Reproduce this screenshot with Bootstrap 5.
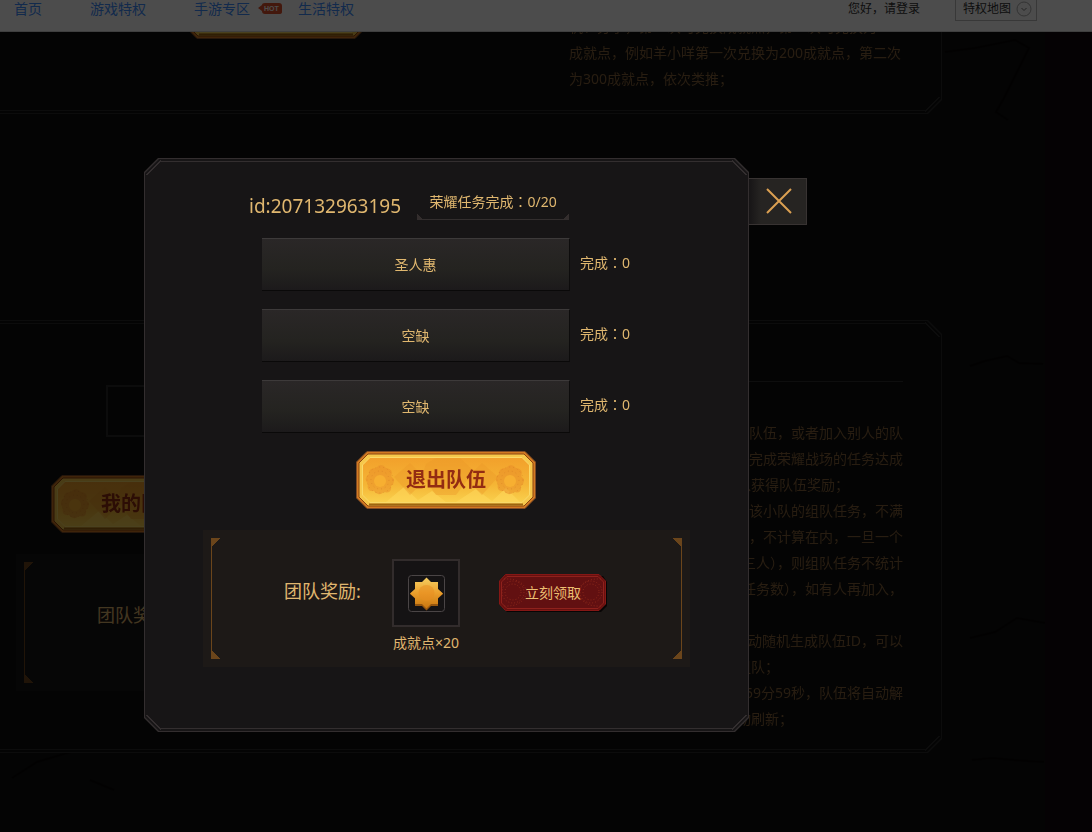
<!DOCTYPE html>
<html lang="zh-CN">
<head>
<meta charset="utf-8">
<meta name="viewport" content="width=device-width, initial-scale=1">
<title>荣耀战场</title>
<link href="https://cdn.jsdelivr.net/npm/bootstrap@5.3.0/dist/css/bootstrap.min.css" rel="stylesheet">
<style>
body{background:#0f0e0e;color:#e0b76f;font:14px/26px "Noto Sans","Noto Sans CJK SC",sans-serif;min-height:100vh;overflow:hidden}
.mid{font-family:"Noto Sans CJK TC",sans-serif;line-height:1}
.topbar{height:32px;background:#fff;border-bottom:1px solid #d2d2d2}
.topbar .bar-row{height:18px;padding-left:14px;padding-right:55px}
.topbar a{text-decoration:none;color:#3c8cff;line-height:18px}
.topbar .login{font-size:12px;color:#333;margin-right:35px}
.nav-gap{margin-right:48px}
.map-btn{font-size:12px;line-height:20px;height:24px;background:#fff;border:1px solid #bbb;color:#333;width:82px;padding:0 4px 0 7px}
/* page behind the dialog */
.stage{margin:-40px 150px 0 0}
.scene{position:absolute;inset:0;width:100%;height:100%;z-index:-1;opacity:.5}
.edge{position:fixed;top:32px;bottom:0;right:0;width:47px;background:#120810;z-index:-1}
.frame{--line:#292929;--fill:#0f0e0e;position:relative;isolation:isolate}
.frame::before,.frame::after{content:"";position:absolute;inset:0;z-index:-1}
.frame::before{background:var(--line);clip-path:polygon(14px 0,calc(100% - 14px) 0,100% 14px,100% calc(100% - 14px),calc(100% - 14px) 100%,14px 100%,0 calc(100% - 14px),0 14px)}
.frame::after{inset:1px;background:linear-gradient(var(--line),var(--line)) 14px 2px/calc(100% - 28px) 1px no-repeat,linear-gradient(var(--line),var(--line)) 14px calc(100% - 2px)/calc(100% - 28px) 1px no-repeat,
linear-gradient(135deg,transparent 12px,var(--line) 12px,var(--line) 13px,transparent 13px) 0 0/16px 16px no-repeat,linear-gradient(225deg,transparent 12px,var(--line) 12px,var(--line) 13px,transparent 13px) 100% 0/16px 16px no-repeat,
linear-gradient(45deg,transparent 12px,var(--line) 12px,var(--line) 13px,transparent 13px) 0 100%/16px 16px no-repeat,linear-gradient(315deg,transparent 12px,var(--line) 12px,var(--line) 13px,transparent 13px) 100% 100%/16px 16px no-repeat,var(--fill);
clip-path:polygon(14px 0,calc(100% - 14px) 0,100% 14px,100% calc(100% - 14px),calc(100% - 14px) 100%,14px 100%,0 calc(100% - 14px),0 14px)}
.section{margin-left:-20px;padding-left:20px;padding-right:39px}
.exchange{padding-top:21px;padding-bottom:22px;margin-bottom:206px}
.exchange .gold{margin-left:186px}
.rules{width:334px;color:#85623a}
.rules p{margin:0;white-space:nowrap}
.exchange .rules{padding-top:33px}
.team{padding-top:61px;padding-bottom:21px}
.team .rules{border-top:1px solid #303030;padding-top:38px;margin-bottom:0}
.team-left{padding-top:4px}
.team-input{display:block;width:308px;height:52px;margin-left:106px;background:transparent;border:2px solid #292929;color:inherit}
.team .gold{margin:38px 0 21px 51px}
.team .reward{margin-left:16px;--back:#151414}
.dim{position:fixed;inset:0;background:rgba(0,0,0,.7);z-index:1040}
/* buttons */
.gold,.red{position:relative;display:block;border:0;background:none;padding:0;isolation:isolate}
.gold{width:180px;height:58px;color:#932c12;font-size:20px;font-weight:700}
.red{width:108px;height:38px;color:#ecbf72;font-size:14px}
.gold svg,.red svg{position:absolute;inset:0;width:100%;height:100%;z-index:-1}
/* dialog */
.dialog{--line:#332e2f;--fill:#171516;position:absolute;left:144px;top:158px;width:605px;padding:28px 58px 65px 59px;z-index:1050}
.close-tab{position:absolute;left:100%;top:20px;width:58px;height:47px;border:1px solid #383332;border-left:0;background:linear-gradient(90deg,#171516,#262422 12px);padding:0 0 3px 2px}
.head-row{height:52px;padding-left:46px}
.team-id{font-size:19px;line-height:40px;font-weight:400;margin:0 16px 0 0}
.progress-note{width:152px;height:34px;line-height:32px;border-bottom:1px solid #332e2e;text-align:center;
background:linear-gradient(45deg,#332d2d 4px,transparent 4px) 0 100%/8px 6px no-repeat,linear-gradient(315deg,#332d2d 4px,transparent 4px) 100% 100%/8px 6px no-repeat}
.members{padding-left:59px;gap:18px;margin-bottom:18px}
.slot{width:308px;height:53px;line-height:51px;text-align:center;background:linear-gradient(#2a2727,#242320 60%,#1c1a1b);border-top:1px solid #3d3a3a;border-bottom:1px solid #0a0909;border-right:1px solid #0d0c0c}
.done{margin-left:10px;line-height:49px}
.quit{margin:0 auto 21px 153px}
.reward{--back:#1d1917;width:487px;height:137px;padding:29px 0 0 81px;background:var(--back);position:relative}
.reward .bracket{position:absolute;inset:8px;width:calc(100% - 16px);height:calc(100% - 16px);border-left:1px solid #6b451b;border-right:1px solid #6b451b;
background:linear-gradient(135deg,#6b451b 6px,transparent 6px) 0 0/9px 9px no-repeat,linear-gradient(225deg,#6b451b 6px,transparent 6px) 100% 0/9px 9px no-repeat,linear-gradient(45deg,#6b451b 6px,transparent 6px) 0 100%/9px 9px no-repeat,linear-gradient(315deg,#6b451b 6px,transparent 6px) 100% 100%/9px 9px no-repeat}
.reward-name{font-size:18px;line-height:64px;width:108px}
.prize{width:68px;margin-right:39px}
.prize-box{width:68px;height:68px;background:#151314;border:2px solid #322c2c}
.prize-name{line-height:32px;white-space:nowrap;text-align:center}
.claim{margin-top:15px}
</style>
</head>
<body>
<svg width="0" height="0" class="position-absolute" aria-hidden="true">
<defs>
<linearGradient id="gFace" x2="0" y2="1"><stop stop-color="#f2a02b"/><stop offset=".6" stop-color="#f5b535"/><stop offset="1" stop-color="#f9d04d"/></linearGradient>
<linearGradient id="gStar" x2="0" y2="1"><stop stop-color="#f5cf62"/><stop offset=".5" stop-color="#eb9f2c"/><stop offset="1" stop-color="#c8760f"/></linearGradient>
<symbol id="goldPlate" viewBox="0 0 180 58">
<path d="M11 .5H169L179.500 11V47L169 57.500H11L.5 47V11Z" fill="#d27a22" stroke="#7e4a25"/>
<path d="M12 3H168L177 12V46L168 55H12L3 46V12Z" fill="#f6c84b" stroke="#8d4610"/>
<path d="M14 6.500H166L173.500 14V44L166 51.500H14L6.500 44V14Z" fill="url(#gFace)" stroke="#f9d968"/>
<path d="M30 51L48 36 62 49 76 40 90 51ZM100 51L120 38 136 50 150 37 164 51Z" fill="#ffd95c" opacity=".55"/>
<path d="M38 26L54 12 70 28 54 44ZM142 26L126 12 110 28 126 44ZM70 13L80 7H104L118 20 100 44H80L66 24Z" fill="#eb9928" opacity=".4"/>
<g fill="#e98d28" opacity=".5"><path id="flower" d="M20 17Q25 11 30 17Q38 18 35 25Q41 30 35 35Q36 43 28 41Q22 46 18 40Q10 41 12 33Q7 27 13 23Q12 17 20 17Z"/><use href="#flower" x="130"/></g>
<g fill="#f7af31"><circle cx="24" cy="30" r="6"/><circle cx="154" cy="30" r="6"/></g>
<g fill="none" stroke="#c96f22" stroke-dasharray="1 3" opacity=".4"><circle cx="24" cy="29" r="9"/><circle cx="24" cy="29" r="13"/><circle cx="154" cy="29" r="9"/><circle cx="154" cy="29" r="13"/></g>
<path d="M13 53.500H167" stroke="#9d6511" stroke-width="2"/>
</symbol>
</defs>
</svg>
<svg class="scene" aria-hidden="true" fill="none" stroke="#000" stroke-width="2"><path d="M20 50l20 1 30-4 18 2M90 60v32l-4 10M945 52l30-4 40-8 14 8-10 20-15 30-8 14 12 8M970 366l15-5 22-5 12 7 24 1M12 778l25-16 40-12M90 780l24 10M970 638l25-6 22-14 28 5M972 760l20-2 22 2 30 2M880 700l20 4 40-3"/></svg>
<div class="edge"></div>
<header class="topbar fixed-top overflow-hidden">
<nav class="bar-row d-flex align-items-center" aria-label="主导航">
<a class="nav-gap" href="#">首页</a><a class="nav-gap" href="#">游戏特权</a><a class="me-2" href="#">手游专区</a>
<svg class="me-3" width="24" height="12" aria-label="HOT"><path d="M0 5L4 2Q4 0 7 0H21Q24 0 24 3V9Q24 11 21 11H7Q4 11 4 8Z" fill="#e0522c"/><text x="6" y="8" font-family="Liberation Sans,sans-serif" font-weight="700" font-size="7" fill="#fff">HOT</text></svg>
<a href="#">生活特权</a>
<a class="login ms-auto" href="#">您好，请登录</a>
<button class="map-btn d-flex align-items-center justify-content-between flex-shrink-0" type="button">特权地图<svg width="16" height="16" fill="none" stroke="#aaa"><circle cx="8" cy="8" r="7"/><path d="M5.500 7L8 9.500 10.500 7" stroke="#777"/></svg></button>
</nav>
</header>

<main class="stage">
<section class="frame section exchange d-flex justify-content-between align-items-start">
<button class="gold" type="button" aria-label="兑换"><svg><use href="#goldPlate"/></svg></button>
<div class="rules"><p>机、分享，第一次可兑换成就点，第一次可兑换为</p><p>成就点，例如羊小咩第一次兑换为200成就点，第二次</p><p>为300成就点，依次类推；</p></div>
</section>
<section class="frame section team d-flex justify-content-between align-items-start">
<div class="team-left">
<input class="team-input" type="text" aria-label="队伍ID">
<button class="gold" type="button"><svg><use href="#goldPlate"/></svg>我的队伍</button>
<div class="reward"><span class="bracket"></span><div class="reward-name">团队奖励:</div></div>
</div>
<div class="rules">
<p class="text-end">1、活动期间每位用户可创建队伍，或者加入别人的队</p>
<p class="text-end">伍，组成三人小队，共同完成荣耀战场的任务达成</p>
<p>一定数量之后，每名成员可以获得队伍奖励；</p>
<p class="text-end">2、队伍满三人开始统计该小队的组队任务，不满</p>
<p class="text-end">三人时完成的任务数，不计算在内，一旦一个</p>
<p class="text-end">成员退出（不满三人），则组队任务不统计</p>
<p class="text-end">（保留已有的任务数），如有人再加入，</p>
<p>则继续统计任务；</p>
<p class="text-end">3、创建队伍后自动随机生成队伍ID，可以</p>
<p>将此号码告诉好友邀请好友组队；</p>
<p class="text-end">4、每日23点59分59秒，队伍将自动解</p>
<p>散，次日零点队伍信息将自动刷新；</p>
</div>
</section>
</main>
<div class="dim"></div>

<div class="dialog frame" role="dialog" aria-label="我的队伍">
<button class="close-tab" type="button" aria-label="关闭"><svg width="26" height="26" stroke="#dba052" stroke-width="2"><path d="M1 1L25 25M25 1L1 25"/></svg></button>
<div class="head-row d-flex align-items-start"><h2 class="team-id">id:207132963195</h2><div class="progress-note">荣耀任务完成<span class="mid" lang="zh-Hant">：</span>0/20</div></div>
<div class="members d-flex flex-column">
<div class="d-flex"><div class="slot">圣人惠</div><div class="done">完成<span class="mid" lang="zh-Hant">：</span>0</div></div>
<div class="d-flex"><div class="slot">空缺</div><div class="done">完成<span class="mid" lang="zh-Hant">：</span>0</div></div>
<div class="d-flex"><div class="slot">空缺</div><div class="done">完成<span class="mid" lang="zh-Hant">：</span>0</div></div>
</div>
<button class="gold quit" type="button"><svg><use href="#goldPlate"/></svg>退出队伍</button>
<div class="reward d-flex align-items-start"><span class="bracket"></span>
<div class="reward-name">团队奖励:</div>
<div class="prize"><div class="prize-box d-flex align-items-center justify-content-center"><svg width="37" height="37"><rect x=".5" y=".5" width="36" height="36" rx="3" fill="none" stroke="#4a4546"/><path d="M18.500 3L23 7.500H30V14.500L35 19 30 23.500V31H23L18.500 35.500 14 31H7V23.500L2 19 7 14.500V7.500H14Z" fill="#95560f"/><path d="M18.500 2.500L23 7H30V14L35 18.500 30 23V29H23L18.500 33.500 14 29H7V23L2 18.500 7 14V7H14Z" fill="url(#gStar)"/><circle cx="18.500" cy="18" r="8" fill="#e88b20" opacity=".5"/></svg></div><div class="prize-name">成就点×20</div></div>
<button class="red claim" type="button"><svg viewBox="0 0 108 38"><path d="M8 2H104L108 8V32L102 38H8L2 32Z" fill="#080505"/><path d="M6.500 .5H100L106.500 7V30L100 36.500H6.500L.5 30V7Z" fill="#68100f" stroke="#851715"/><path d="M8 2.500H99L104.500 8V29L99 34.500H8L2.500 29V8Z" fill="#621011" stroke="#8f211c"/><g fill="none" stroke="#8f2a1c" stroke-dasharray="1 2"><circle cx="14" cy="18" r="8"/><circle cx="14" cy="18" r="11"/><path d="M5 5Q24 4 28 18Q24 33 5 32M102 5Q83 4 79 18Q83 33 102 32"/><circle cx="92" cy="18" r="8"/><circle cx="92" cy="18" r="11"/></g></svg>立刻领取</button>
</div>
</div>
<script src="https://cdn.jsdelivr.net/npm/bootstrap@5.3.0/dist/js/bootstrap.bundle.min.js"></script>
</body>
</html>
